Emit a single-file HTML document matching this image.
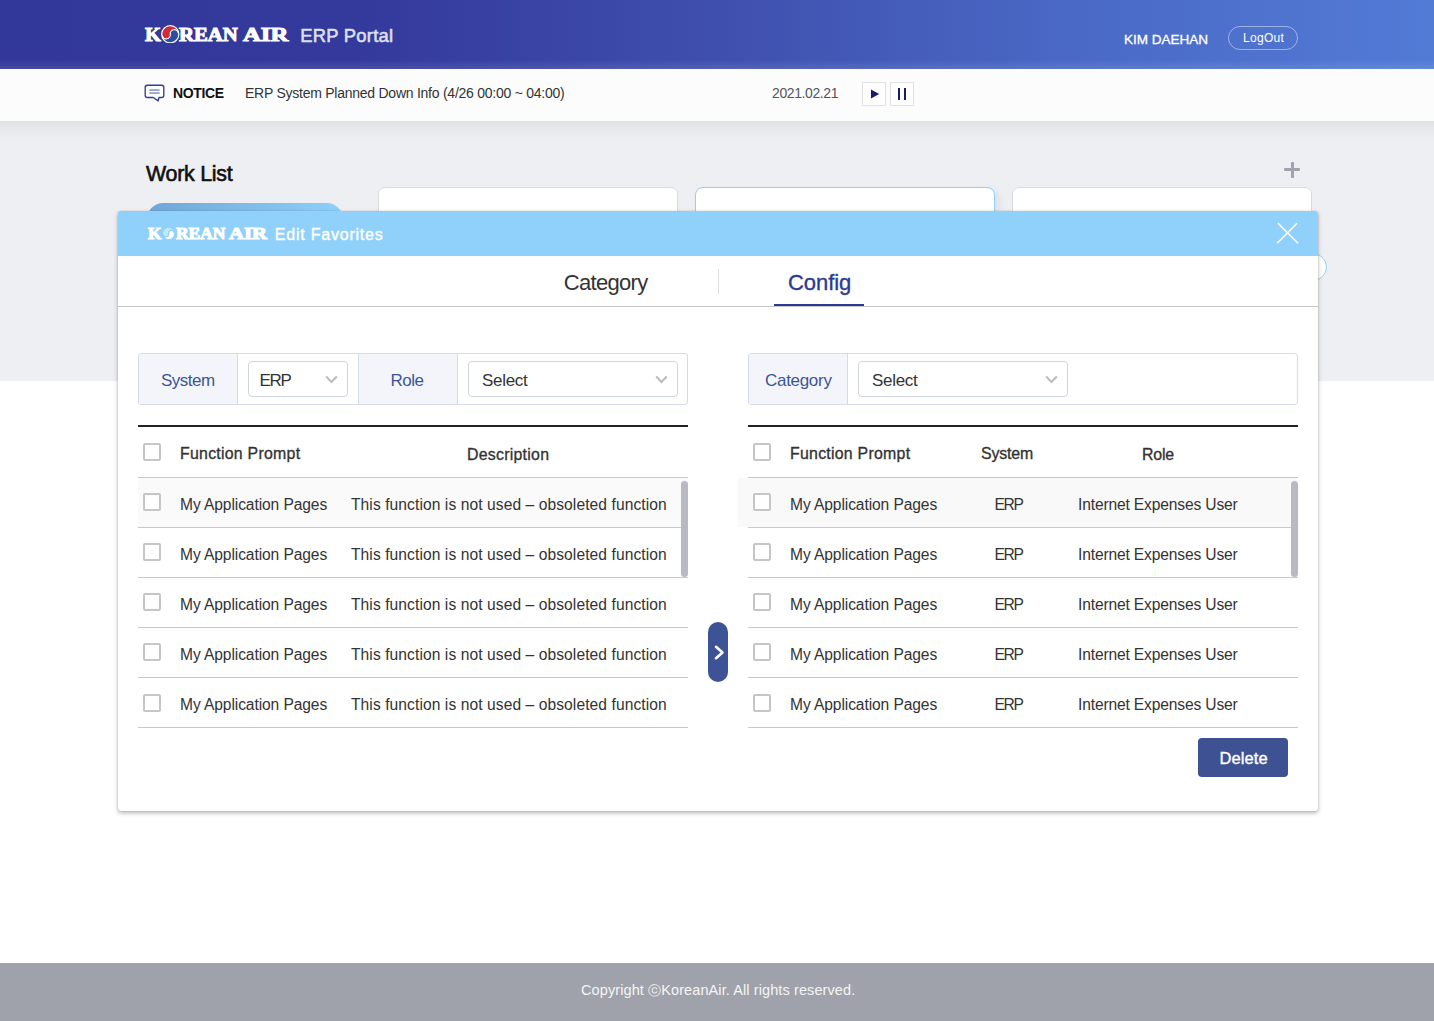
<!DOCTYPE html>
<html><head><meta charset="utf-8">
<style>
*{margin:0;padding:0;box-sizing:border-box}
html,body{width:1434px;height:1021px;overflow:hidden;background:#fff;font-family:"Liberation Sans",sans-serif}
.a{position:absolute;white-space:nowrap;line-height:1}
#hdr{position:absolute;left:0;top:0;width:1434px;height:69px;background:linear-gradient(90deg,#32379a 0%,#34399c 25%,#3f4fae 50%,#4a69c6 75%,#527bd6 100%)}
#hdr:after{content:"";position:absolute;left:0;right:0;bottom:0;height:9px;background:linear-gradient(180deg,rgba(255,255,255,0),rgba(255,255,255,.1))}
#notice{position:absolute;left:0;top:69px;width:1434px;height:52px;background:#fcfcfd}
#gray{position:absolute;left:0;top:121px;width:1434px;height:260px;background:#eeeff3}
#gray:before{content:"";position:absolute;left:0;right:0;top:0;height:20px;background:linear-gradient(180deg,rgba(0,0,30,.055),rgba(0,0,30,.025) 45%,rgba(0,0,30,0))}
#foot{position:absolute;left:0;top:963px;width:1434px;height:58px;background:#9fa2aa}
.card{position:absolute;top:187px;width:300px;height:120px;background:#fff;border:1px solid #d9dae0;border-radius:7px}
.logo{font-family:"Liberation Serif",serif;font-weight:bold;color:#fff;transform-origin:0 0;-webkit-text-stroke:1px #fff}
#modal{position:absolute;left:118px;top:211px;width:1200px;height:600px;background:#fff;border-radius:3px;box-shadow:0 2px 4px rgba(0,0,0,.3),0 0 1px rgba(0,0,0,.3)}
#mhead{position:absolute;left:0;top:0;width:1200px;height:45px;background:#8fd1fa;border-radius:3px 3px 0 0}
.fbox{position:absolute;top:353px;height:52px;border:1px solid #d5dbe8;border-radius:3px;background:#fff}
.lab{position:absolute;top:0;height:50px;background:#f3f5fa;color:#3d5596}
.sel{position:absolute;top:361px;height:36px;border:1px solid #d0d5e0;border-radius:4px;background:#fff}
.chev{position:absolute}
.thick{position:absolute;top:425px;height:2px;background:#222}
.hline{position:absolute;height:1px;background:#c9c9c9}
.cb{position:absolute;width:18px;height:18px;border:2px solid #c6c6c6;border-radius:2px;background:#fff}
.t15{font-size:15.6px;color:#333}
.th{font-size:15.9px;font-weight:normal;color:#333;-webkit-text-stroke:0.32px #333;letter-spacing:0.25px}
.sb{position:absolute;width:7px;border-radius:4px;background:#b9bac1}
</style></head><body>
<div id="hdr"></div>
<!-- header logo -->
<div id="logo1"><div class="a logo" id="l1k" style="left:145px;top:24.6px;font-size:19px;transform:scaleX(1.072)">K</div><div class="a logo" id="l1r" style="left:179px;top:24.6px;font-size:19px;transform:scaleX(1.091)">REAN</div><div class="a logo" id="l1a" style="left:243.2px;top:24.6px;font-size:19px;transform:scaleX(1.298)">AIR</div></div>
<svg class="a" style="left:161px;top:24.5px" width="18.5" height="18.5" viewBox="0 0 18 18"><circle cx="9" cy="9" r="8.9" fill="#fff"/><g transform="rotate(-8 9 9)"><path d="M1.2 9 A7.8 7.8 0 0 1 16.8 9 A3.9 3.9 0 0 0 9 9 A3.9 3.9 0 0 1 1.2 9Z" fill="#d22a38"/><path d="M1.2 9 A7.8 7.8 0 0 0 16.8 9 A3.9 3.9 0 0 0 9 9 A3.9 3.9 0 0 1 1.2 9Z" fill="#2d4c9f"/><path d="M1.2 9 A3.9 3.9 0 0 0 9 9 A3.9 3.9 0 0 1 16.8 9" stroke="#fff" stroke-width="1.1" fill="none"/></g></svg>
<div class="a" id="erpportal" style="left:300.2px;top:27px;font-size:18.4px;color:#dde0f1;-webkit-text-stroke:0.55px #dde0f1;letter-spacing:0.25px">ERP Portal</div>
<div class="a" id="kim" style="left:1124px;top:32.5px;font-size:13.5px;color:#fff;-webkit-text-stroke:0.3px #fff">KIM DAEHAN</div>
<div class="a" style="left:1228px;top:26px;width:70px;height:24px;border:1px solid rgba(255,255,255,.45);border-radius:12px"></div>
<div class="a" id="logout" style="left:1243px;top:32px;font-size:12px;color:#fff;letter-spacing:0.3px">LogOut</div>

<div id="notice"></div>
<svg class="a" style="left:144px;top:84px" width="21" height="19" viewBox="0 0 21 19"><path d="M3.4 1.2 H17.6 Q19.8 1.2 19.8 3.4 V11.3 Q19.8 13.5 17.6 13.5 H15 L14.2 16.9 L9.2 13.5 H3.4 Q1.2 13.5 1.2 11.3 V3.4 Q1.2 1.2 3.4 1.2Z" fill="#fff" stroke="#2f3f96" stroke-width="1.35" stroke-linejoin="round"/><rect x="5.2" y="5.3" width="10.4" height="1.5" fill="#8193c8"/><rect x="5.2" y="8.3" width="10.4" height="1.5" fill="#8193c8"/></svg>
<div class="a" id="noticelbl" style="left:173px;top:86px;font-size:14px;font-weight:bold;color:#111;letter-spacing:-0.35px">NOTICE</div>
<div class="a" id="noticetxt" style="left:245px;top:85.5px;font-size:14px;color:#333;letter-spacing:-0.25px">ERP System Planned Down Info (4/26 00:00 ~ 04:00)</div>
<div class="a" id="date" style="left:772px;top:85.5px;font-size:14px;color:#555;letter-spacing:-0.4px">2021.02.21</div>
<div class="a" style="left:862px;top:82px;width:24px;height:24px;border:1px solid #e1e1e4;background:#fff"></div>
<div class="a" style="left:890px;top:82px;width:24px;height:24px;border:1px solid #e1e1e4;background:#fff"></div>
<svg class="a" style="left:870px;top:89px" width="10" height="10" viewBox="0 0 10 10"><path d="M1 0.5 L9.2 5 L1 9.5Z" fill="#181b6a"/></svg>
<div class="a" style="left:898px;top:88px;width:2.2px;height:12px;background:#181b6a"></div>
<div class="a" style="left:903.8px;top:88px;width:2.2px;height:12px;background:#181b6a"></div>

<div id="gray"></div>
<div class="a" id="worklist" style="left:146px;top:164px;font-size:21.4px;color:#111;-webkit-text-stroke:0.6px #111;letter-spacing:-0.25px">Work List</div>
<div class="a" style="left:1284px;top:168px;width:16px;height:3px;background:#a0a2ad;border-radius:1px"></div>
<div class="a" style="left:1290.5px;top:162px;width:3px;height:16px;background:#a0a2ad;border-radius:1px"></div>
<div class="a" style="left:147px;top:203px;width:196px;height:60px;border-radius:16px 16px 0 0;background:linear-gradient(90deg,#6fa7d8,#8fd1fa)"></div>
<div class="card" style="left:378px"></div>
<div class="card" style="left:695px;border:1.5px solid #8fd1fa;border-radius:8px;box-shadow:4px 3px 8px rgba(0,0,40,.07)"></div>
<div class="card" style="left:1012px"></div>
<div class="a" style="left:1299px;top:253px;width:28px;height:28px;border-radius:50%;border:1px solid #8fd1fa;background:#fff"></div>

<div id="foot"></div>
<div class="a" id="footer" style="left:581px;top:983px;font-size:14.5px;color:#f4f5f7;letter-spacing:0.1px">Copyright <span style="font-size:13px">ⓒ</span>KoreanAir. All rights reserved.</div>

<div id="modal">
 <div id="mhead"></div>
</div>
<div id="logo2"><div class="a logo" id="l2k" style="left:148.2px;top:226.4px;font-size:15.9px;transform:scaleX(1.088)">K</div><div class="a logo" id="l2r" style="left:175.8px;top:226.4px;font-size:15.9px;transform:scaleX(1.098)">REAN</div><div class="a logo" id="l2a" style="left:229.3px;top:226.4px;font-size:15.9px;transform:scaleX(1.304)">AIR</div></div>
<svg class="a" style="left:162.3px;top:227px" width="13.2" height="13.2" viewBox="0 0 18 18"><g transform="rotate(-8 9 9)"><path d="M1.4 9 A7.6 7.6 0 0 1 16.6 9 A3.8 3.8 0 0 0 9 9 A3.8 3.8 0 0 1 1.4 9Z" fill="#c6e8fc"/><path d="M1.4 9 A7.6 7.6 0 0 0 16.6 9 A3.8 3.8 0 0 0 9 9 A3.8 3.8 0 0 1 1.4 9Z" fill="#fff"/><path d="M1.4 9 A3.8 3.8 0 0 0 9 9 A3.8 3.8 0 0 1 16.6 9" stroke="#8fd1fa" stroke-width="1.6" fill="none"/></g></svg>
<div class="a" id="editfav" style="left:274.8px;top:226.5px;font-size:16px;color:#fff;-webkit-text-stroke:0.4px #fff;letter-spacing:0.78px">Edit Favorites</div>
<svg class="a" style="left:1276px;top:221px" width="24" height="24" viewBox="0 0 24 24"><path d="M2 2.2 L22 22.2 M21 2.2 L1.2 22.2" stroke="#fff" stroke-width="1.6" fill="none"/></svg>
<!-- tabs -->
<div class="a" id="tabcat" style="left:563.8px;top:271.6px;font-size:22px;color:#333;letter-spacing:-0.7px">Category</div>
<div class="a" style="left:718px;top:269px;width:1px;height:25px;background:#dcdcdc"></div>
<div class="a" id="tabcfg" style="left:788px;top:271.6px;font-size:22px;color:#2b3b92;letter-spacing:-0.05px;-webkit-text-stroke:0.35px #2b3b92">Config</div>
<div class="a" style="left:118px;top:306px;width:1200px;height:1px;background:#c6c6c6"></div>
<div class="a" style="left:774px;top:304px;width:90px;height:2px;background:#2b3b92"></div>

<!-- left filter -->
<div class="fbox" style="left:138px;width:550px">
  <div class="lab" style="left:0;width:99px;border-right:1px solid #d5dbe8;border-radius:2px 0 0 2px"></div>
  <div class="lab" style="left:219px;width:100px;border-left:1px solid #d5dbe8;border-right:1px solid #d5dbe8"></div>
</div>
<div class="a" id="lsys" style="top:372px;left:161px;font-size:17px;color:#3d5596;letter-spacing:-0.5px">System</div>
<div class="sel" style="left:248px;width:100px"></div>
<div class="a" id="lerp" style="top:372px;left:259.5px;font-size:17px;color:#333;letter-spacing:-1.3px">ERP</div>
<svg class="chev" style="left:325px;top:375px" width="13" height="9" viewBox="0 0 13 9"><path d="M1.2 1.5 L6.5 7 L11.8 1.5" stroke="#bcbcbc" stroke-width="2" fill="none"/></svg>
<div class="a" id="lrole" style="top:372px;left:390.5px;font-size:17px;color:#3d5596;letter-spacing:-0.5px">Role</div>
<div class="sel" style="left:468px;width:210px"></div>
<div class="a" id="lselect" style="top:372px;left:482px;font-size:17px;color:#333;letter-spacing:-0.3px">Select</div>
<svg class="chev" style="left:655px;top:375px" width="13" height="9" viewBox="0 0 13 9"><path d="M1.2 1.5 L6.5 7 L11.8 1.5" stroke="#bcbcbc" stroke-width="2" fill="none"/></svg>

<!-- right filter -->
<div class="fbox" style="left:748px;width:550px">
  <div class="lab" style="left:0;width:99px;border-right:1px solid #d5dbe8;border-radius:2px 0 0 2px"></div>
</div>
<div class="a" id="rcat" style="top:372px;left:765px;font-size:17px;color:#3d5596;letter-spacing:-0.3px">Category</div>
<div class="sel" style="left:858px;width:210px"></div>
<div class="a" id="rselect" style="top:372px;left:872px;font-size:17px;color:#333;letter-spacing:-0.3px">Select</div>
<svg class="chev" style="left:1045px;top:375px" width="13" height="9" viewBox="0 0 13 9"><path d="M1.2 1.5 L6.5 7 L11.8 1.5" stroke="#bcbcbc" stroke-width="2" fill="none"/></svg>
<!-- left table -->
<div class="thick" style="left:138px;width:550px"></div>
<div class="hline" style="left:138px;top:477px;width:550px"></div>
<div class="cb" style="left:143px;top:443px"></div>
<div class="a th" id="lfp" style="left:180px;top:446.4px">Function Prompt</div>
<div class="a th" id="ldesc" style="left:467px;top:447.4px">Description</div>
<div class="a" style="left:138px;top:478px;width:550px;height:49px;background:#fafafa"></div>
<div class="hline" style="left:138px;top:527px;width:550px"></div>
<div class="cb" style="left:143px;top:493px"></div>
<div class="a t15" id="r1map" style="left:180px;top:497.3px;letter-spacing:-0.1px">My Application Pages</div>
<div class="a t15" id="r1desc" style="left:351px;top:497.3px;letter-spacing:0.08px">This function is not used – obsoleted function</div>
<div class="hline" style="left:138px;top:577px;width:550px"></div>
<div class="cb" style="left:143px;top:543px"></div>
<div class="a t15" style="left:180px;top:547.3px;letter-spacing:-0.1px">My Application Pages</div>
<div class="a t15" style="left:351px;top:547.3px;letter-spacing:0.08px">This function is not used – obsoleted function</div>
<div class="hline" style="left:138px;top:627px;width:550px"></div>
<div class="cb" style="left:143px;top:593px"></div>
<div class="a t15" style="left:180px;top:597.3px;letter-spacing:-0.1px">My Application Pages</div>
<div class="a t15" style="left:351px;top:597.3px;letter-spacing:0.08px">This function is not used – obsoleted function</div>
<div class="hline" style="left:138px;top:677px;width:550px"></div>
<div class="cb" style="left:143px;top:643px"></div>
<div class="a t15" style="left:180px;top:647.3px;letter-spacing:-0.1px">My Application Pages</div>
<div class="a t15" style="left:351px;top:647.3px;letter-spacing:0.08px">This function is not used – obsoleted function</div>
<div class="hline" style="left:138px;top:727px;width:550px"></div>
<div class="cb" style="left:143px;top:694px"></div>
<div class="a t15" style="left:180px;top:697.3px;letter-spacing:-0.1px">My Application Pages</div>
<div class="a t15" style="left:351px;top:697.3px;letter-spacing:0.08px">This function is not used – obsoleted function</div>
<div class="sb" style="left:681px;top:481px;height:96px"></div>
<!-- right table -->
<div class="thick" style="left:748px;width:550px"></div>
<div class="hline" style="left:748px;top:477px;width:550px"></div>
<div class="cb" style="left:753px;top:443px"></div>
<div class="a th" id="rfp" style="left:790px;top:446.4px">Function Prompt</div>
<div class="a th" id="rsys" style="left:981px;top:446.4px;letter-spacing:-0.15px">System</div>
<div class="a th" id="rrole" style="left:1142px;top:447.4px;letter-spacing:-0.2px">Role</div>
<div class="a" style="left:738px;top:478px;width:560px;height:49px;background:#f9f9f9"></div>
<div class="hline" style="left:748px;top:527px;width:550px"></div>
<div class="cb" style="left:753px;top:493px"></div>
<div class="a t15" style="left:790px;top:497.3px;letter-spacing:-0.1px">My Application Pages</div>
<div class="a t15" id="r1erp" style="letter-spacing:-1.3px;left:994.5px;top:497.3px">ERP</div>
<div class="a t15" id="r1ieu" style="letter-spacing:-0.15px;left:1078px;top:497.3px">Internet Expenses User</div>
<div class="hline" style="left:748px;top:577px;width:550px"></div>
<div class="cb" style="left:753px;top:543px"></div>
<div class="a t15" style="left:790px;top:547.3px;letter-spacing:-0.1px">My Application Pages</div>
<div class="a t15" style="letter-spacing:-1.3px;left:994.5px;top:547.3px">ERP</div>
<div class="a t15" style="letter-spacing:-0.15px;left:1078px;top:547.3px">Internet Expenses User</div>
<div class="hline" style="left:748px;top:627px;width:550px"></div>
<div class="cb" style="left:753px;top:593px"></div>
<div class="a t15" style="left:790px;top:597.3px;letter-spacing:-0.1px">My Application Pages</div>
<div class="a t15" style="letter-spacing:-1.3px;left:994.5px;top:597.3px">ERP</div>
<div class="a t15" style="letter-spacing:-0.15px;left:1078px;top:597.3px">Internet Expenses User</div>
<div class="hline" style="left:748px;top:677px;width:550px"></div>
<div class="cb" style="left:753px;top:643px"></div>
<div class="a t15" style="left:790px;top:647.3px;letter-spacing:-0.1px">My Application Pages</div>
<div class="a t15" style="letter-spacing:-1.3px;left:994.5px;top:647.3px">ERP</div>
<div class="a t15" style="letter-spacing:-0.15px;left:1078px;top:647.3px">Internet Expenses User</div>
<div class="hline" style="left:748px;top:727px;width:550px"></div>
<div class="cb" style="left:753px;top:694px"></div>
<div class="a t15" style="left:790px;top:697.3px;letter-spacing:-0.1px">My Application Pages</div>
<div class="a t15" style="letter-spacing:-1.3px;left:994.5px;top:697.3px">ERP</div>
<div class="a t15" style="letter-spacing:-0.15px;left:1078px;top:697.3px">Internet Expenses User</div>
<div class="sb" style="left:1291px;top:481px;height:96px"></div>
<div class="a" style="left:708px;top:622px;width:20px;height:60px;border-radius:10px;background:#3d5396"></div>
<svg class="a" style="left:712px;top:644px" width="14" height="17" viewBox="0 0 14 17"><path d="M4 2.8 L10.5 8.5 L4 14.2" stroke="#fff" stroke-width="2.6" fill="none" stroke-linecap="round" stroke-linejoin="round"/></svg>
<div class="a" style="left:1198px;top:738px;width:90px;height:39px;border-radius:4px;background:#3d5193"></div>
<div class="a" id="delete" style="left:1219.5px;top:750px;font-size:16.5px;color:#fff;-webkit-text-stroke:0.4px #fff;letter-spacing:0.1px">Delete</div>
</body></html>
